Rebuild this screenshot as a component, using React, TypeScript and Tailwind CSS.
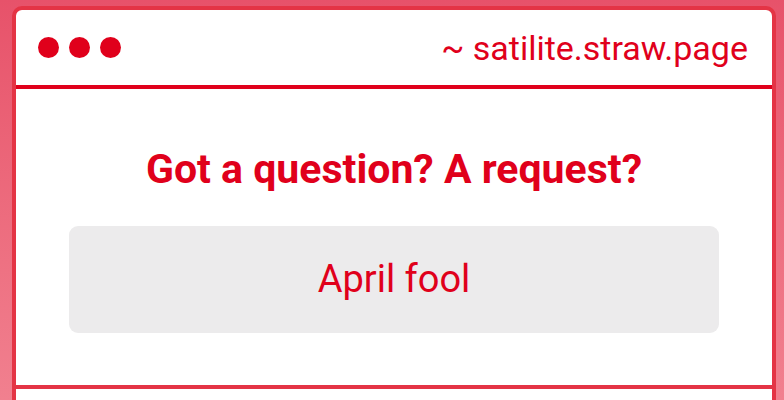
export default function App() {
  return (
    <div
      className="h-[400px] w-[784px] overflow-hidden bg-gradient-to-b from-[#e7526a] to-[#f1808f] pt-[6px]"
      style={{ fontFamily: 'Roboto, "Liberation Sans", sans-serif' }}
    >
      <div className="ml-[12px] w-[764px] rounded-t-[10px] border-4 border-[#e43445] bg-white">
        <div className="flex h-[75px] items-center justify-between pl-[22px] pr-[24px]">
          <div className="flex gap-[10px]">
            <span className="h-[21px] w-[21px] rounded-full bg-[#e0001b]" />
            <span className="h-[21px] w-[21px] rounded-full bg-[#e0001b]" />
            <span className="h-[21px] w-[21px] rounded-full bg-[#e0001b]" />
          </div>
          <span className="text-[34px] leading-[40px] text-[#e0001b]">~ satilite.straw.page</span>
        </div>
        <div className="h-[4px] bg-[#e0001b]" />
        <div className="flex flex-col items-center pt-[56px] pb-[52px]">
          <h1 className="text-[41px] font-bold leading-[48px] text-[#e0001b]">
            Got a question? A request?
          </h1>
          <div className="mt-[33px] flex h-[107px] w-[650px] items-center justify-center rounded-[9px] bg-[#ecebec]">
            <span className="text-[38px] text-[#e0001b]">April fool</span>
          </div>
        </div>
        <div className="h-[4px] bg-[#e43445]" />
        <div className="h-[40px]" />
      </div>
    </div>
  );
}
